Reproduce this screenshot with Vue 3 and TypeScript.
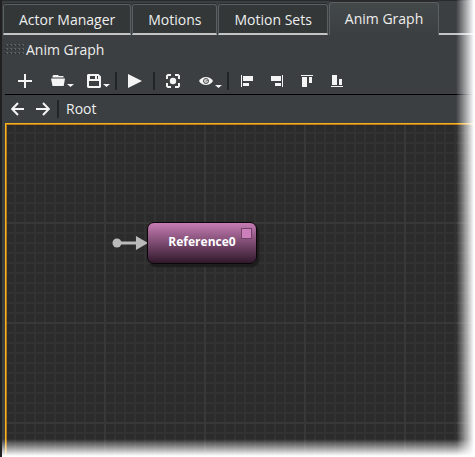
<script setup lang="ts">
import { ref } from 'vue'

const tabs: string[] = ['Actor Manager', 'Motions', 'Motion Sets', 'Anim Graph']
const activeTab = ref<string>('Anim Graph')

const alignments = [
  { label: 'Align left', path: 'M0 0h1v12H0zM2 1h10v5H2zM2 8h6v3H2z' },
  { label: 'Align right', path: 'M11 0h1v12h-1zM0 1h10v5H0zM4 8h6v3H4z' },
  { label: 'Align top', path: 'M0 0h12v1H0zM1 2h5v10H1zM8 2h3v6H8z' },
  { label: 'Align bottom', path: 'M0 11h12v1H0zM1 0h5v10H1zM8 4h3v6H8z' },
]
</script>

<template>
  <main class="editor">
    <div class="tabs" role="tablist">
      <button
        v-for="tab in tabs"
        :key="tab"
        type="button"
        role="tab"
        class="tab"
        :class="{ active: tab === activeTab }"
        :aria-selected="tab === activeTab"
        @click="activeTab = tab"
      >{{ tab }}</button>
      <span class="tab-rest"></span>
    </div>

    <section class="panel">
      <header class="title">
        <svg class="grip" width="19" height="12" aria-hidden="true">
          <defs>
            <pattern id="grip-dots" width="4" height="4" patternUnits="userSpaceOnUse">
              <path d="M0 1h2v1H0z" fill="#2b3032" />
              <path d="M1 0h2v1H1zM2 1h1v1H2z" fill="#5c6061" />
            </pattern>
          </defs>
          <rect width="19" height="12" fill="url(#grip-dots)" />
        </svg>
        <span>Anim Graph</span>
      </header>

      <div class="toolbar" role="toolbar">
        <button type="button" class="tool" aria-label="Add node">
          <svg width="14" height="14"><path d="M6 0h2v6h6v2H8v6H6V8H0V6h6z" /></svg>
        </button>
        <button type="button" class="tool menu" aria-label="Open">
          <svg width="24" height="16">
            <path d="M1.500 4.500V3L2.500 2H7L8 3H12.500V4.500zM0 5.500H14L12.700 13H1.500z" />
            <path d="M16 11h7l-3.500 3z" />
          </svg>
        </button>
        <button type="button" class="tool menu" aria-label="Save">
          <svg width="24" height="16">
            <path fill-rule="evenodd" d="M1 1H11.500L14 3.500V14L13 15H1L0 14V2zM3 3V6H11V3zM2 8V13H12V8z" />
            <path d="M8 3h2v3H8zM16 11h7l-3.500 3z" />
          </svg>
        </button>
        <span class="sep"></span>
        <button type="button" class="tool" aria-label="Play">
          <svg width="14" height="14"><path d="M0 0L14 7L0 14z" /></svg>
        </button>
        <span class="sep"></span>
        <button type="button" class="tool" aria-label="Zoom to selection">
          <svg width="14" height="14">
            <path d="M1 5V2L2 1H5M9 1H12L13 2V5M13 9V12L12 13H9M5 13H2L1 12V9" class="stroke" />
            <circle cx="7" cy="7" r="3.200" />
          </svg>
        </button>
        <button type="button" class="tool menu" aria-label="Visualization">
          <svg width="24" height="16">
            <path d="M0 8C3 2.600 11 2.600 14 8C11 13.400 3 13.400 0 8z" />
            <circle cx="7" cy="8" r="2.500" fill="#d8d8d8" stroke="#4a4e50" stroke-width="1" />
            <path d="M7 8.500L8.500 7" stroke="#4a4e50" stroke-width="1" />
            <path d="M16 12h7l-3.500 3z" />
          </svg>
        </button>
        <span class="sep"></span>
        <button v-for="a in alignments" :key="a.label" type="button" class="tool align" :aria-label="a.label">
          <svg width="12" height="12"><path :d="a.path" /></svg>
        </button>
      </div>

      <nav class="crumbs">
        <button type="button" class="step" aria-label="Back">
          <svg width="14" height="14"><path d="M13 7H1.500M7 1L1.200 7L7 13" class="stroke" /></svg>
        </button>
        <button type="button" class="step" aria-label="Forward">
          <svg width="14" height="14"><path d="M0 7H12.500M7 1L12.800 7L7 13" class="stroke" /></svg>
        </button>
        <span class="sep"></span>
        <a href="#" class="root" @click.prevent>Root</a>
      </nav>

      <div class="graph">
        <svg class="entry" width="36" height="16" aria-hidden="true">
          <path d="M5 8H26" stroke="#bababa" stroke-width="3" />
          <circle cx="5" cy="8" r="4.500" fill="#bababa" />
          <path d="M24 1L36 8L24 15z" fill="#bababa" />
        </svg>
        <div class="node">
          <span>Reference0</span>
          <i class="port"></i>
        </div>
      </div>
    </section>
    <div class="fade right"></div>
    <div class="fade bottom"></div>
  </main>
</template>

<style>
body {
  background: #ffffff;
}
</style>

<style scoped>
.editor {
  position: relative;
  display: flex;
  flex-direction: column;
  box-sizing: border-box;
  min-height: 100vh;
  overflow: hidden;
  border-left: 2px solid #202020;
  background: #3b3f41;
  color: #eeeeee;
  font: 14px/20px "Open Sans", "Noto Sans", sans-serif;
}

button {
  margin: 0;
  padding: 0;
  border: 0;
  background: none;
  color: inherit;
  font: inherit;
}

svg {
  display: block;
  fill: #f4f4f4;
}

.stroke {
  fill: none;
  stroke: #f4f4f4;
  stroke-width: 2;
}

.tabs {
  display: flex;
  align-items: flex-end;
  height: 35px;
  border-top: 1px solid #282a2b;
  box-sizing: border-box;
}

.tab {
  box-sizing: border-box;
  height: 31px;
  margin-left: 1px;
  padding: 2px 15px 0;
  border: 1px solid #5a5f60;
  border-bottom: 2px solid #c4c5c6;
  border-radius: 3px 3px 0 0;
  background: #333738;
  box-shadow: 0 -1px 0 #2a2d2e;
  white-space: nowrap;
}

.tab.active {
  height: 33px;
  padding-bottom: 3px;
  border-bottom: 0;
  background: linear-gradient(#434849, #3b3f41);
}

.tab-rest {
  flex: 1;
  height: 2px;
  background: #c4c5c6;
}

.panel {
  display: flex;
  flex: 1;
  flex-direction: column;
  padding-left: 3px;
}

.title {
  display: flex;
  align-items: center;
  gap: 2px;
  height: 30px;
}

.toolbar {
  display: flex;
  align-items: center;
  box-sizing: border-box;
  height: 30px;
  padding: 3px 0 0 6px;
  border-bottom: 1px solid #000000;
}

.tool {
  display: flex;
  align-items: center;
  justify-content: center;
  width: 28px;
  height: 24px;
}

.tool.menu {
  justify-content: flex-end;
  width: 36px;
}

.tool.align {
  box-sizing: border-box;
  justify-content: flex-start;
  width: 30px;
  padding-left: 8px;
}

.sep {
  width: 2px;
  height: 18px;
  margin: 0 4px;
  background: #222526;
}

.crumbs {
  display: flex;
  align-items: center;
  height: 28px;
  padding-left: 6px;
}

.step {
  width: 14px;
  margin-right: 11px;
}

.crumbs .sep {
  margin: 0 7px 0 -4px;
}

.root {
  color: inherit;
  text-decoration: none;
}

.graph {
  display: flex;
  flex: 1;
  align-items: flex-start;
  padding: 98px 0 0 106px;
  border: 1px solid #f5b323;
  border-width: 1px 0 0 1px;
  box-shadow: inset 1px 1px 0 #b97812;
  background-color: #2b2b2b;
  background-image:
    linear-gradient(#383838 2px, transparent 2px),
    linear-gradient(90deg, #383838 2px, transparent 2px),
    linear-gradient(#323232 2px, transparent 2px),
    linear-gradient(90deg, #323232 2px, transparent 2px);
  background-position: 98px 98px, 98px 98px, 8px 8px, 8px 8px;
  background-size: 100px 100px, 100px 100px, 10px 10px, 10px 10px;
}

.entry {
  flex: none;
  margin-top: 13px;
}

.node {
  position: relative;
  box-sizing: border-box;
  width: 110px;
  height: 42px;
  margin-left: -1px;
  border: 1px solid #0c060a;
  border-radius: 7px;
  background: linear-gradient(#c67cb4, #30182b);
  box-shadow: 2px 3px 1px #1d1d1d;
  color: #ffffff;
  font-size: 12px;
  font-weight: 700;
  line-height: 38px;
  text-align: center;
}

.port {
  position: absolute;
  top: 5px;
  right: 4px;
  box-sizing: border-box;
  width: 11px;
  height: 11px;
  border: 1px solid #744168;
  background: #cb80bb;
}

.fade {
  position: absolute;
  pointer-events: none;
}

.fade.right {
  top: 0;
  right: 0;
  bottom: 0;
  width: 19px;
  background: linear-gradient(90deg, transparent, #ffffff 18px);
}

.fade.bottom {
  right: 0;
  bottom: 0;
  left: -2px;
  height: 18px;
  background: linear-gradient(transparent, #ffffff 17px);
}
</style>
